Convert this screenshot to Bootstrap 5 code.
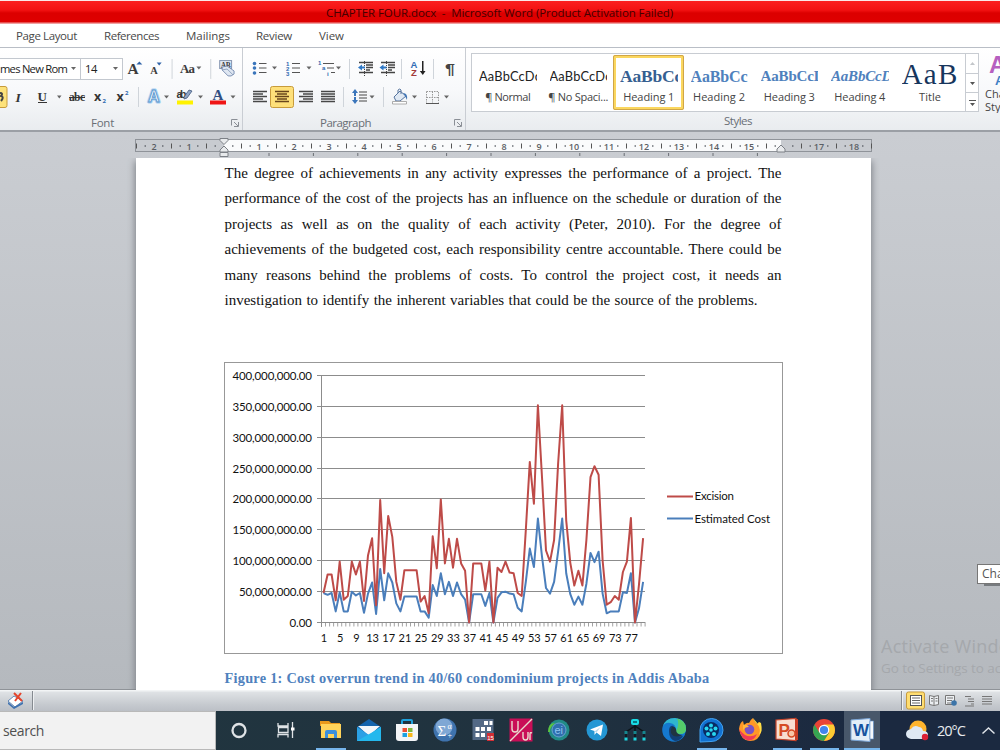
<!DOCTYPE html>
<html lang="en">
<head>
  <meta charset="UTF-8">
  <title>CHAPTER FOUR.docx - Microsoft Word</title>
  <meta name="viewport" content="width=device-width, initial-scale=1">
  <link href="https://cdn.jsdelivr.net/npm/bootstrap@5.3.2/dist/css/bootstrap.min.css" rel="stylesheet">
  <style>
    body { width: 1000px; height: 750px; overflow: hidden; font-family: "Open Sans", "Noto Sans", sans-serif; font-size: 11px; line-height: 1.2; color: #444; background: #fff; }
    svg { display: block; flex: none; }
    [data-w] { display: inline-block; white-space: nowrap; }
    .titlebar { height: 24px; background: linear-gradient(#fbe9e9 0 1px, #fb2020 1px, #f31212 10px, #dc0000 13px, #de0000 22px, #f0a0a0 23px); color: #450000; padding: 6px 0 0 326px; font-size: 11.5px; }
    .title-text { white-space: pre !important; }
    .tabs { height: 24px; border-bottom: 1px solid #b9bec6; font-size: 11.5px; color: #494949; }
    .tabs span { margin-top: 5px; }
    #tabRef, #tabMail, #tabView { margin-left: 27px; }
    #tabRev { margin-left: 26px; }
    .ribbon { height: 84px; background: linear-gradient(#fff, #f8f9fb 50%, #e9ecef); border-bottom: 2px solid #9b9fa5; }
    .grp { height: 82px; border-right: 1px solid #c9cdd3; padding-top: 9px; }
    .grp-font { width: 243px; }
    .grp-para { width: 223px; }
    .grp-styles { width: 534px; border-right: 0; }
    .grp-name { color: #696e75; font-size: 11.5px; height: 16px; margin-top: 1px; }
    #capFont { margin-right: 116px; }
    #capPara { margin-right: 82px; }
    #capStyles { padding-left: 258px; }
    .combo { height: 22px; border: 1px solid #c3c8cf; border-left: 0; background: #fff; color: #222; font-size: 11.2px; margin-top: 1px; }
    #fontName { width: 81px; }
    #fontSize { width: 42px; }
    .gallery { width: 508px; height: 59px; border: 1px solid #c8ccd2; background: #fff; margin: -4px 0 0 5px; }
    .style-item { width: 70.5px; height: 55px; padding: 9px 6px 0 7px; color: #444; margin-top: 1px; }
    .style-item .sample { height: 25px; overflow: hidden; white-space: nowrap; line-height: 25px; color: #222; font-family: Lato, sans-serif; font-size: 12.8px; }
    .style-item .cap { font-size: 11px; line-height: 14px; margin: 1px -5px 0; white-space: nowrap; text-align: center; }
    .style-item.active { border: 3px solid #fbd75f; outline: 1px solid #d0a648; outline-offset: -1px; border-radius: 2px; padding: 6px 3px 0 4px; }
    .style-item .head { font-family: "Liberation Serif", serif; font-weight: bold; color: #4f81bd; }
    .style-item #h1s { font-size: 17.5px; color: #365f91; }
    .style-item #h2s { font-size: 16px; }
    .style-item #h3s, .style-item #h4s { font-size: 15px; }
    .style-item #h7s { font-family: "Liberation Serif", serif; font-size: 29px; color: #17365d; height: 29px; line-height: 29px; margin-top: -4px; }
    .scroller { width: 14px; border-left: 1px solid #c8ccd2; }
    #changeStyles { width: 20px; margin: -4px 0 0 6px; }
    .workspace { height: 557px; background: linear-gradient(#cacdd2, #b5b9be); }
    .page { width: 735px; height: 532px; margin-left: 135.5px; background: #fff; padding: 3px 0 0 89px; box-shadow: 0 4px 7px 1px #7d8187; clip-path: inset(0 -9px 0 -9px); }
    .prose { width: 557px; font-family: "Liberation Serif", serif; font-size: 15px; line-height: 25.4px; color: #111; }
    .prose div { text-align: justify; text-align-last: justify; white-space: nowrap; height: 25.4px; }
    .prose .last-line { width: 533px; }
    .caption-line { font-family: "Liberation Serif", serif; font-weight: bold; font-size: 14.3px; color: #4f81bd; margin-top: 15px; }
    .chart { margin: 49px 0 0 -.5px; }
    .watermark { left: 881px; top: 634px; width: 119px; overflow: hidden; color: #a5a8ac; white-space: nowrap; }
    .watermark div:first-child { font-size: 18px; line-height: 24px; }
    .watermark div:last-child { font-size: 13.5px; line-height: 21px; }
    .hint { left: 977px; top: 564px; width: 40px; height: 20px; border: 1px solid #767676; background: #fff; box-shadow: 6px 3px 0 -1px #777b7f; padding: 2px 4px; font-size: 12px; color: #555; }
    .statusbar { height: 22px; background: linear-gradient(#8f9398 0 1px, #f2f4f5 1px 2px, #dfe2e5 3px, #c6cacf 70%, #bcc0c6); }
    .taskbar { height: 39px; background: linear-gradient(90deg, #21363f, #20323f 55%, #1b2940 85%); }
    .search { width: 216px; height: 39px; background: #f2f2f2; border: solid #b9b9b9; border-width: 1px 1px 1px 0; color: #505050; font-size: 14px; padding: 11px 0 0 3px; }
    .app { width: 38px; height: 39px; }
    .temp { width: 37px; color: #e8ebee; font-size: 14.5px; }
  </style>
</head>
<body>
  <div class="titlebar"><span data-w="347" class="title-text">CHAPTER FOUR.docx  -  Microsoft Word (Product Activation Failed)</span></div>

  <div class="tabs d-flex">
    <span data-w="61" class="ms-3">Page Layout</span>
    <span data-w="55" id="tabRef">References</span>
    <span data-w="44" id="tabMail">Mailings</span>
    <span data-w="36" id="tabRev">Review</span>
    <span data-w="25" id="tabView">View</span>
  </div>

  <div class="ribbon d-flex">
    <div class="grp grp-font">
      <div class="d-flex">
        <div class="combo d-flex align-items-center" id="fontName"><span data-w="67">mes New Rom</span><svg class="ms-auto" width="13" height="8"><path d="M4 2h5l-2.500 3z" fill="#666"/></svg></div>
        <div class="combo d-flex align-items-center ps-1" id="fontSize"><span data-w="12">14</span><svg class="ms-auto" width="13" height="8"><path d="M4 2h5l-2.500 3z" fill="#666"/></svg></div>
        <svg viewBox="123 57 120 24" width="119" height="24" font-family="Liberation Serif, serif" font-weight="bold" fill="#3b3b3b">
          <text x="127.500" y="74" font-size="15.500">A</text><path d="M136.500 64.500l3-3 3 3z" fill="#2f63a8"/>
          <text x="150.500" y="74" font-size="10.500">A</text><path d="M157 62.500h5l-2.500 3z" fill="#2f63a8"/>
          <path d="M172.500 59v20M211.500 59v20" stroke="#cfd4da"/>
          <text x="180.500" y="73.500" font-size="13" textLength="15">Aa</text><path d="M197 66.500h5l-2.500 3z" fill="#666"/>
          <rect x="220.500" y="60.500" width="12" height="8" fill="#e3e9f3" stroke="#8494b0"/><text x="221.500" y="68" font-size="7.500" textLength="10">AB</text>
          <path d="M223 67l5-1 7 5v3l-3 2h-3l-6-6z" fill="#dfe7f2" stroke="#7388ad" stroke-width=".9"/><path d="M223 70l5-1 6 6" fill="none" stroke="#7388ad" stroke-width=".7"/>
        </svg>
      </div>
      <svg viewBox="0 81 242 34" width="242" height="34" font-family="Liberation Serif, serif" font-weight="bold" fill="#353535">
        <rect x="-16" y="86.500" width="23" height="21" rx="2" fill="#fde27a" stroke="#c79b3b"/><path d="M0 93q3.500 0 1 3q3.500 1 0 5" fill="none" stroke="#444" stroke-width="2"/>
        <text x="15.500" y="101.500" font-size="13.500" font-style="italic">I</text>
        <text x="37.500" y="101" font-size="13">U</text><path d="M38 102.500h9" stroke="#353535"/>
        <text x="69" y="100.500" font-size="11.500" textLength="16">abc</text><path d="M69 97.500h16" stroke="#353535"/>
        <g font-family="Open Sans, sans-serif"><text x="94" y="101" font-size="12.500">x</text><text x="102.500" y="102.500" font-size="6" fill="#2d68b0">2</text>
        <text x="116.500" y="101" font-size="12.500">x</text><text x="125" y="95" font-size="6" fill="#2d68b0">2</text></g>
        <path d="M138.500 87v20" stroke="#cfd4da"/>
        <text x="148" y="102" font-size="16" fill="#a9d0f2" stroke="#a9d0f2" stroke-width="3" stroke-linejoin="round" font-family="Liberation Sans, sans-serif">A</text>
        <text x="148" y="102" font-size="16" fill="#f4faff" stroke="#5995cc" stroke-width=".9" font-family="Liberation Sans, sans-serif">A</text>
        <text x="176.500" y="97.500" font-size="10.500" textLength="10" font-family="Liberation Sans, sans-serif">ab</text><path d="M184 97l5-7 3 1-5 7-3 1z" fill="#8fa5c6" stroke="#41597f" stroke-width=".8"/><path d="M177 100.500h16v4h-16z" fill="#fff200"/>
        <text x="212.500" y="100" font-size="15" fill="#314f83">A</text><path d="M210 100.500h16v4h-16z" fill="#ef1515"/>
        <path d="M57 95.500h4.500l-2.200 3zM164 95.500h5l-2.500 3zM198 95.500h5l-2.500 3zM230.500 95.500h5l-2.500 3z" fill="#666"/>
      </svg>
      <div class="grp-name d-flex justify-content-end">
        <span data-w="23" id="capFont">Font</span>
        <svg width="12" height="14" stroke="#8a8f96" fill="none"><path d="M1.500 9.500v-6h6M4 6l4 4M8.500 6v4.500H4"/></svg>
      </div>
    </div>

    <div class="grp grp-para">
      <svg viewBox="243 57 222 58" width="222" height="58" fill="#666">
        <g stroke="#555" stroke-width="1.200"><path d="M259 63.500h7.500M259 68h7.500M259 72.500h7.500M292 63.500h8M292 68h8M292 72.500h8M323 63.500h11M327 68h7M331 72.500h4"/></g>
        <g fill="#3a75bb"><circle cx="254.500" cy="63.500" r="1.800"/><circle cx="254.500" cy="68" r="1.800"/><circle cx="254.500" cy="73" r="1.800"/></g>
        <g fill="#2d68b0" font-family="Liberation Sans, sans-serif" font-weight="bold" font-size="6"><text x="286" y="65.500">1</text><text x="286" y="70.500">2</text><text x="286" y="75.500">3</text><text x="318" y="65">1</text><text x="322" y="70">a</text><text x="327" y="76">i</text></g>
        <path d="M272 66.500h5l-2.500 3zM306.500 66.500h5l-2.500 3zM336 66.500h5l-2.500 3z"/>
        <path d="M349.500 59v20M401.500 59v20M433.500 59v20M343.500 87v20M383.500 87v20" stroke="#cfd4da"/>
        <g stroke="#444"><path d="M359 62.500h14M366 65h7M366 67.500h7M366 70h4M359 72.500h14M381 62.500h14M388 65h7M388 67.500h7M388 70h4M381 72.500h14" stroke-width="1.500"/><path d="M364.500 61v15M386.500 61v15" stroke-dasharray="1 1"/></g>
        <path d="M358 67.500l4-3v2h3v2h-3v2zM379.500 67.500l4-3v2h3v2h-3v2z" fill="#2f78c5"/>
        <g font-family="Liberation Sans, sans-serif" font-weight="bold" font-size="9.500"><text x="410.500" y="67.500" fill="#2f6db5">A</text><text x="411" y="76" fill="#a33a3a">Z</text></g>
        <path d="M422 61h1.500v10h2L422.800 75l-3-4h2.200z" fill="#222"/>
        <text x="445" y="74" font-family="Liberation Sans, sans-serif" font-size="14" font-weight="bold" fill="#444" textLength="10" lengthAdjust="spacingAndGlyphs">¶</text>
        <rect x="270.500" y="86.500" width="23" height="21" rx="2" fill="#fee07a" stroke="#c79b3b"/>
        <g stroke="#474747" stroke-width="1.500"><path d="M253 91.500h14M253 94h10M253 96.500h14M253 99h10M253 101.500h14M299 91.500h14M303 94h10M299 96.500h14M303 99h10M299 101.500h14M321 91.500h14M321 94h14M321 96.500h14M321 99h14M321 101.500h14"/><path d="M275 91.500h14M277 94h10M275 96.500h14M277 99h10M275 101.500h14" stroke="#68451c"/><path d="M359 92h8M359 95h8M359 98h8M359 101h8" stroke-width="1.200"/></g>
        <path d="M355 89l3 4h-2v3h-2v-3h-2zM355 104l3-4h-2v-3h-2v3h-2z" fill="#3a75bb"/>
        <path d="M369.500 95.500h5l-2.500 3zM412 95.500h5l-2.500 3zM444 95.500h5l-2.500 3z"/>
        <path d="M394 97l6-6 6 5-6 5h-4z" fill="#dfe8f3" stroke="#56749e"/><path d="M398 93v-3q2-2 3 0v4" fill="none" stroke="#56749e"/><path d="M403 93q5 0 4 7l-2-4z" fill="#3f74b4"/><path d="M392.500 101.500h14v2.500h-14z" fill="#fff" stroke="#999" stroke-width=".8"/>
        <path d="M426.500 91.500h12v11M426.500 91.500v11M432.500 91.500v11M426.500 97.500h12" fill="none" stroke="#999" stroke-dasharray="1.500 1"/><path d="M426 103.500h13" stroke="#555"/>
      </svg>
      <div class="grp-name d-flex justify-content-end">
        <span data-w="51" id="capPara">Paragraph</span>
        <svg width="12" height="14" stroke="#8a8f96" fill="none"><path d="M1.500 9.500v-6h6M4 6l4 4M8.500 6v4.500H4"/></svg>
      </div>
    </div>

    <div class="grp grp-styles">
      <div class="d-flex">
        <div class="gallery d-flex">
          <div class="style-item"><div class="sample"><span data-w="62">AaBbCcDc</span></div><div class="cap"><span data-w="45">¶ Normal</span></div></div>
          <div class="style-item"><div class="sample"><span data-w="62">AaBbCcDc</span></div><div class="cap"><span data-w="60">¶ No Spaci...</span></div></div>
          <div class="style-item active"><div class="sample head" id="h1s"><span data-w="62">AaBbCc</span></div><div class="cap"><span data-w="51">Heading 1</span></div></div>
          <div class="style-item"><div class="sample head" id="h2s"><span data-w="57">AaBbCc</span></div><div class="cap"><span data-w="52">Heading 2</span></div></div>
          <div class="style-item"><div class="sample head" id="h3s"><span data-w="64">AaBbCcD</span></div><div class="cap"><span data-w="51">Heading 3</span></div></div>
          <div class="style-item"><div class="sample head fst-italic" id="h4s"><span data-w="61">AaBbCcD</span></div><div class="cap"><span data-w="51">Heading 4</span></div></div>
          <div class="style-item"><div class="sample" id="h7s"><span data-w="57">AaB</span></div><div class="cap"><span data-w="22">Title</span></div></div>
          <div class="scroller"><svg width="13" height="57"><path d="M0 19.500h13M0 38.500h13" stroke="#c8ccd2"/><path d="M4 11h5l-2.500-3z" fill="#c3c6ca"/><path d="M4 28h5l-2.500 3zM4 49h5l-2.500 3z" fill="#555"/><path d="M3 46.500h7" stroke="#555"/></svg></div>
        </div>
        <div class="overflow-hidden" id="changeStyles">
          <svg viewBox="986 53 20 34" width="20" height="34" font-family="Liberation Sans, sans-serif"><text x="990" y="73" font-size="24" font-weight="bold" fill="#b65fc0">A</text><text x="996" y="85" font-size="13" font-weight="bold" fill="#3f7fc5">A</text></svg>
          <div>Change<br>Styles</div>
        </div>
      </div>
      <div class="grp-name" id="capStyles"><span data-w="28">Styles</span></div>
    </div>
  </div>

  <div class="workspace">
    <svg id="ruler" width="1000" height="26" viewBox="0 132 1000 26"></svg>
    <div class="page">
      <div class="prose">
        <div>The degree of achievements in any activity expresses the performance of a project. The</div>
        <div>performance of the cost of the projects has an influence on the schedule or duration of the</div>
        <div>projects as well as on the quality of each activity (Peter, 2010). For the degree of</div>
        <div>achievements of the budgeted cost, each responsibility centre accountable. There could be</div>
        <div>many reasons behind the problems of costs. To control the project cost, it needs an</div>
        <div class="last-line">investigation to identify the inherent variables that could be the source of the problems.</div>
      </div>
      <svg class="chart" id="chart" width="560" height="293" viewBox="224 362 560 293" font-family="Lato, sans-serif" font-size="11.500" fill="#111"></svg>
      <div class="caption-line"><span data-w="485">Figure 1: Cost overrun trend in 40/60 condominium projects in Addis Ababa</span></div>
    </div>
  </div>

  <div class="statusbar">
    <svg width="1000" height="22" viewBox="0 689 1000 22">
      <path d="M8 701l6-5 9 5-8 6z" fill="#fff" stroke="#6287b5"/><path d="M8 702l6 5 9-5v2l-9 5-6-5z" fill="#3f72b0"/><path d="M14 693l8 8M21 693l-6 8" stroke="#e5442b" stroke-width="2"/>
      <path d="M32.500 691v19M901.500 691v19" stroke="#858a90"/><path d="M33.500 691v19M902.500 691v19" stroke="#eef0f2"/>
      <rect x="906.500" y="692" width="18" height="17" rx="2" fill="#fedd71" stroke="#c79b3b"/>
      <rect x="910.500" y="695.500" width="11" height="10" fill="#fff" stroke="#555"/><path d="M912 698h8M912 700.500h8M912 703h8" stroke="#666"/>
      <g fill="#eceff2" stroke="#777"><path d="M929.500 695.500l4.500 1 4.500-1v9l-4.500 1-4.500-1zM934 696.500v9"/><path d="M945.500 695.500h9v9h-9z"/></g>
      <path d="M931 698.500h2M931 701h2M935.500 698.500h2M935.500 701h2M947 698h6M947 700.500h5M947 703h4" stroke="#777"/>
      <circle cx="954" cy="703" r="2.800" fill="#3c74a8"/>
      <path d="M965 696.500h6M968 699h6M968 701.500h6M971 704h3M965 706h9M982 696.500h10M982 699h10M982 701.500h10M982 704h10" stroke="#777" stroke-width="1.200"/>
    </svg>
  </div>

  <div class="taskbar d-flex align-items-start">
    <div class="search"><span data-w="41">search</span></div>
    <svg viewBox="216 711 96 39" width="96" height="39" fill="none" stroke="#dfe3e6"><circle cx="239" cy="730.500" r="6.500" stroke-width="2.300"/><path d="M278 723v3h10v-3M278 737.500v-3h10v3M278.500 727.500h9.500v5h-9.500zM292.500 722v16" stroke-width="1.300"/><path d="M291 727.500h3.500v3H291z" fill="#fff" stroke="none"/></svg>
    <svg class="app" viewBox="-19 -19 38 39"><path d="M-11-9h9l2 2h9v3h-20z" fill="#e9991b"/><path d="M-10-6h20V8h-20z" fill="#ffd35a"/><path d="M-6 8V2q0-2 2-2h8q2 0 2 2v6H3V4h-6v4z" fill="#3b8fdd"/><path d="M-15 18h30v3h-30z" fill="#76b5ec"/></svg>
    <svg class="app" viewBox="-19 -19 38 39"><path d="M-12-3L0-11 12-3v14h-24z" fill="#1464ac"/><path d="M-11-4h22L1 5h-2z" fill="#f3f7fa"/><path d="M-12-3L0 5l12-8v14h-24z" fill="#2aa0e5"/><path d="M-12 11L2 3l10-6v14z" fill="#24b8ed"/></svg>
    <svg class="app" viewBox="-19 -19 38 39"><path d="M-5-5v-4q0-1 1-1h8q1 0 1 1v4" fill="none" stroke="#1da1dc" stroke-width="2"/><path d="M-11-6h22V8q0 3-3 3H-8q-3 0-3-3z" fill="#f3f5f7"/><path d="M-4.500-2H0v4h-4.500z" fill="#ee5034"/><path d="M1-2h4.500v4H1z" fill="#7fb83b"/><path d="M-4.500 3H0v4h-4.500z" fill="#1ba1e2"/><path d="M1 3h4.500v4H1z" fill="#f9b71b"/></svg>
    <svg class="app" viewBox="-19 -19 38 39"><circle r="11.500" fill="#3f73ae"/><circle cx="-1" cy="-3" r="8.500" fill="#7fa7d4"/><g fill="#fff" font-family="Liberation Serif, serif"><text x="-7.500" y="5.500" font-size="15">Σ</text><text x="2.500" y="-1" font-size="8">α</text><text x="2.500" y="8" font-size="8">+</text></g></svg>
    <svg class="app" viewBox="-19 -19 38 39"><path d="M-10.500-11h21v21h-21z" fill="#536985"/><path d="M1-9h4v4H1zM6.500-9h3v4h-3zM-7.500-3h4v4h-4zM-2-3h4v4h-4zM4-3h4v4H4zM-7.500 3h4v4h-4zM-2 3h4v4h-4z" fill="#fff"/><path d="M4 3h7v8H4z" fill="#d12e34"/><text x="4.200" y="9.500" font-size="6" fill="#fff" font-family="Liberation Sans, sans-serif">15</text></svg>
    <svg class="app" viewBox="-19 -19 38 39"><path d="M-11.500-11.500h23v23h-23z" fill="#c90e57"/><path d="M-11 11L11-11M-9-9V-1q0 3 3 3t3-3v-8M2 2v5q0 3 2.500 3T7 7V2M9 10V4q0-2 2-1" fill="none" stroke="#eadbcf" stroke-width="1.400"/></svg>
    <svg class="app" viewBox="-19 -19 38 39"><circle r="10.500" fill="#218b87"/><circle r="7" fill="#2f6fae" stroke="#6aa1d0"/><path d="M-11 2q0-9 7-9l-3 3q-2 2-2 6z" fill="#5dc43e"/><text x="-4.500" y="4" font-size="11" fill="#8dc3ed" font-family="Liberation Sans, sans-serif">ei</text></svg>
    <svg class="app" viewBox="-19 -19 38 39"><circle r="10.500" fill="#2497d4"/><path d="M-7-.5L6-5.500 4 6-.5 2.500-2.500 5v-4z" fill="#fff"/><path d="M-2.500 1.500L3.500-3-.5 2.500" fill="#b9dbee"/></svg>
    <svg class="app" viewBox="-19 -19 38 39"><path d="M0-5v10M0-4l-9 6v6M0-4l9 6v6M0 4v5" stroke="#0c1418" fill="none" stroke-width="1.500"/><rect x="-4" y="-11" width="8" height="6" rx="2" fill="#18dce6"/><path d="M-2-9h4v2h-4z" fill="#0b7884"/><path d="M-10.500 1h3v3h-3zM-1.500 1h3v3h-3zM7.500 1h3v3h-3z" fill="#16858e"/><path d="M-10.500 7.500h3v3h-3zM-1.500 7.500h3v3h-3zM7.500 7.500h3v3h-3z" fill="#1fd3dd"/></svg>
    <svg class="app" viewBox="-19 -19 38 39"><g transform="translate(1 0)"><circle r="11.800" fill="#1579cf"/><path d="M-11.500-3Q-9-12 1-12q11 1 11 11 0 5-6 5-5 0-4-4 0-6-6-7-5-1-7.500 4z" fill="#2fb6cf"/><path d="M3-11.500q9 2 9 10.500 0 5-6 5-4 0-4-3 4-7 1-12.500z" fill="#55cc6a"/><path d="M-5 1q0-6 5-5-3 2-2 6 2 5 11 4-3 5-8 5-6-2-6-10z" fill="#123f75"/><path d="M-2-3q3-1 4 2 0 6 7 6-9 4-12-2-1-3 1-6z" fill="#203440"/></g></svg>
    <svg class="app" viewBox="-19 -19 38 39"><path d="M-11 12V0A11.500 11.500 0 1 1 0 11.500z" fill="#1172d2" stroke="#43a2f0" stroke-width="1"/><circle r="8" fill="#082b64"/><g fill="#27d7f0"><circle r="1.800"/><circle cy="-4.500" r="2"/><circle cx="4.500" cy="-1.500" r="2"/><circle cx="3" cy="4" r="2"/><circle cx="-3" cy="4" r="2"/><circle cx="-4.500" cy="-1.500" r="2"/></g><path d="M-14 18h30v3h-30z" fill="#76b5ec"/></svg>
    <svg class="app" viewBox="-20 -19 38 39"><path d="M-11-1Q-10-8-7-9l1 4q3-3 5-2Q0-10 3-12q1 3 4 6l2-2q3 6 2 10-2 9-11 9T-11-1z" fill="#ff9827"/><path d="M3-12q1 4 5 7 3 4 1 10 4-3 2-12l-2-1-1 2z" fill="#ffde45"/><path d="M-11-1q2 3 6 6 6 3 12-1Q4 11-2 10.500-9 9-11-1z" fill="#f03b59"/><circle cx="-.5" cy="-.5" r="4.800" fill="#7952c4"/><path d="M-7-5q4-1 6 2-5 0-6 4z" fill="#ffb83b"/></svg>
    <svg class="app" viewBox="-19 -19 38 39"><path d="M-11-10L9-11.500v22L-11 9z" fill="#f8ded0" stroke="#c5442b" stroke-width="1.200"/><path d="M8-11h3v21H8z" fill="#c63d25"/><circle cx="4.500" cy="3.500" r="3.500" fill="#f6c6a6" stroke="#d64b24" stroke-width="1.500"/><text x="-8.500" y="6" font-family="Liberation Sans, sans-serif" font-size="17" font-weight="bold" fill="#d64b24">P</text><path d="M-14 18h29v3h-29z" fill="#76b5ec"/></svg>
    <svg class="app" viewBox="-18 -19 38 39"><circle r="11" fill="#e94436"/><path d="M-9.500-5.500A11 11 0 0 0 0 11L5 3-5 2z" fill="#35a552"/><path d="M0 11A11 11 0 0 0 9.500-5.500H0L5 3z" fill="#fccb32"/><circle r="5.300" fill="#fff"/><circle r="4.100" fill="#4185ed"/><path d="M-14 18h29v3h-29z" fill="#76b5ec"/></svg>
    <svg class="app" viewBox="-18 -19 38 39"><path d="M-18-19h36v39h-36z" fill="#48576a"/><path d="M-11-10L8-11.500v23L-11 10z" fill="#e4eef8" stroke="#7aa5d6"/><path d="M8-9h3.500V9H8z" fill="#f5f8fb" stroke="#5b8cc8" stroke-width=".6"/><text x="-9" y="5.500" font-family="Liberation Sans, sans-serif" font-size="16" font-weight="bold" fill="#17539f" textLength="16" lengthAdjust="spacingAndGlyphs">W</text><path d="M-18 18h36v3h-36z" fill="#76b5ec"/></svg>
    <svg viewBox="882 711 55 39" width="55" height="39"><circle cx="918" cy="729" r="8.500" fill="#ffb42d"/><path d="M911 739q-5-1-5-5t5-5q3-5 8-2 3 0 4 4 5 0 5 4t-4 4z" fill="#dfe8f3"/><circle cx="925" cy="737" r="3.200" fill="#dc2034"/></svg>
    <div class="temp align-self-center"><span data-w="28">20°C</span></div>
    <svg width="26" height="39"><path d="M8.500 22.500L14.500 17l6 5.500" fill="none" stroke="#dfe3e8" stroke-width="1.500"/></svg>
  </div>

  <div class="watermark position-absolute"><div><span data-w="152">Activate Windows</span></div><div><span data-w="218">Go to Settings to activate Windows.</span></div></div>
  <div class="hint position-absolute">Chart</div>

  <script src="https://cdn.jsdelivr.net/npm/bootstrap@5.3.2/dist/js/bootstrap.bundle.min.js"></script>
  <script>
    // tracking so that every label takes its nominal width
    document.querySelectorAll("[data-w]").forEach(el => {
      const r = document.createRange();
      r.selectNodeContents(el);
      const natural = r.getBoundingClientRect().width;
      el.style.letterSpacing = (el.dataset.w - natural) / el.textContent.length + "px";
    });

    // ruler, 35px per centimetre, zero at x = 224
    let s = '<rect x="135.500" y="139.500" width="736" height="12" fill="#c8cbd0" stroke="#8f9399"/><rect x="224" y="140" width="557" height="11" fill="#fafbfc"/>';
    for (let q = -10; q <= 74; q++) {
      const x = 224 + q * 8.75;
      if (q === 0 || q === 64) continue;
      if (q % 4 === 0) s += `<text x="${x}" y="149.500" text-anchor="middle">${Math.abs(q / 4)}</text>`;
      else if (q % 2 === 0) s += `<path d="M${x} 143.500v5" stroke="#555"/>`;
      else s += `<rect x="${x - .7}" y="145.300" width="1.400" height="1.400"/>`;
    }
    for (let x = 269; x < 780; x += 44.4) s += `<path d="M${x} 153v3" stroke="#6b6f75"/>`;
    s += '<g fill="#e8eaec" stroke="#7c8086"><path d="M220 138.500h8v2l-4 4-4-4zM224 146l4 4v2h-8v-2zM220 152.500h8v4h-8zM781 145l4 4v3h-8v-3z"/></g>';
    document.getElementById("ruler").innerHTML = `<g font-family="Open Sans, sans-serif" font-size="9" font-weight="600" fill="#5a5e64">${s}</g>`;

    const excision = [48,78,78,36,99,37,43,99,78,99,35,109,137,28,199,80,173,139,66,37,85,85,85,85,34,43,15,140,88,200,96,136,89,136,96,84,0,96,96,96,52,99,0,89,82,99,81,80,48,43,150,261,193,353,236,117,99,134,258,353,166,97,60,84,60,134,236,254,240,101,29,33,43,37,82,99,170,0,62,137];
    const estimated = [48,45,48,18,49,18,18,50,44,48,16,47,65,14,87,36,80,65,31,18,42,42,42,42,18,18,8,61,43,80,46,66,43,65,46,37,0,46,46,46,27,48,0,40,49,50,47,46,24,18,66,120,90,169,107,56,47,66,115,169,80,46,29,42,29,63,113,98,115,47,15,18,18,18,49,48,80,0,23,66];
    const X0 = 321.5, STEP = 4.045, Y0 = 622.5, PER = 0.6155;
    const line = (d, c) => `<polyline fill="none" stroke="${c}" stroke-width="2" stroke-linejoin="round" points="${d.map((v, i) => (X0 + (i + .5) * STEP).toFixed(1) + "," + (Y0 - v * PER).toFixed(1)).join(" ")}"/>`;
    let c = '<rect x="224.500" y="362.500" width="558" height="291" fill="#fff" stroke="#989898"/>';
    for (let v = 0; v <= 400; v += 50) {
      const y = Math.round(Y0 - v * PER) - .5;
      const w = v === 0 ? 22.5 : v < 100 ? 73 : 79.5;
      c += `<path d="M317 ${y}H645" stroke="#8c8c8c"/><text x="${312 - w}" y="${y + 4}" textLength="${w}">${v ? v + ",000,000.00" : "0.00"}</text>`;
    }
    c += `<path d="M${X0} 376V627" stroke="#8c8c8c"/>`;
    for (let i = 1; i <= 80; i++) c += `<path d="M${(X0 + i * STEP).toFixed(1)} 622v4.500" stroke="#8c8c8c" stroke-width=".8"/>`;
    for (let i = 1; i <= 77; i += 4) c += `<text x="${X0 + (i - .5) * STEP + .5}" y="641.500" text-anchor="middle" font-size="11">${i}</text>`;
    c += line(estimated, "#4a7ebb") + line(excision, "#be4b48");
    c += '<path d="M667 496.500h26" stroke="#be4b48" stroke-width="2"/><path d="M667 518.500h26" stroke="#4a7ebb" stroke-width="2"/>';
    c += '<text x="694.500" y="500" textLength="39.500">Excision</text><text x="694.500" y="522.500" textLength="75.500">Estimated Cost</text>';
    document.getElementById("chart").innerHTML = c;
  </script>
</body>
</html>
